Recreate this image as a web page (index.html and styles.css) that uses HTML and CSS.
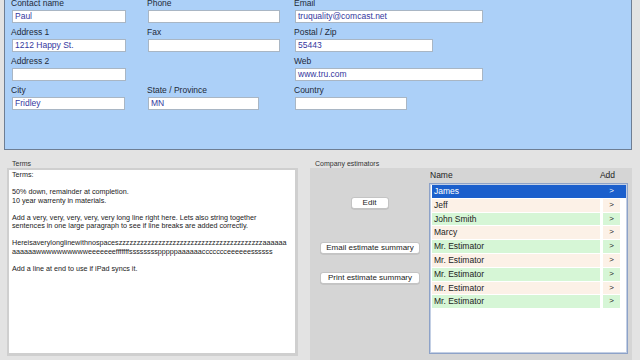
FILE: index.html
```html
<!DOCTYPE html>
<html>
<head>
<meta charset="utf-8">
<link rel="stylesheet" href="styles.css">
</head>
<body>
<div class="page">
  <div class="contact">
    <div class="grid">
      <div class="field"><div class="lbl">Contact name</div><div class="inp w114">Paul</div></div>
      <div class="field"><div class="lbl">Phone</div><div class="inp w132"></div></div>
      <div class="field"><div class="lbl">Email</div><div class="inp w188">truquality@comcast.net</div></div>

      <div class="field"><div class="lbl">Address 1</div><div class="inp w114">1212 Happy St.</div></div>
      <div class="field"><div class="lbl">Fax</div><div class="inp w132"></div></div>
      <div class="field"><div class="lbl">Postal / Zip</div><div class="inp w138">55443</div></div>

      <div class="field"><div class="lbl">Address 2</div><div class="inp w114"></div></div>
      <div class="field"></div>
      <div class="field"><div class="lbl">Web</div><div class="inp w188">www.tru.com</div></div>

      <div class="field"><div class="lbl">City</div><div class="inp w113">Fridley</div></div>
      <div class="field"><div class="lbl">State / Province</div><div class="inp w111">MN</div></div>
      <div class="field"><div class="lbl">Country</div><div class="inp w112"></div></div>
    </div>
  </div>

  <div class="lower">
    <div class="terms">
      <div class="sect-lbl">Terms</div>
      <div class="terms-frame">
        <div class="terms-text"><p>Terms:</p><p>&nbsp;</p><p>50% down, remainder at completion.</p><p>10 year warrenty in materials.</p><p>&nbsp;</p><p>Add a very, very, very, very, very long line right here. Lets also string together</p><p>sentences in one large paragraph to see if line breaks are added correctly.</p><p>&nbsp;</p><p>Hereisaverylonglinewithnospaceszzzzzzzzzzzzzzzzzzzzzzzzzzzzzzzzzzzzzzzzaaaaaa</p><p>aaaaaawwwwwwwwwweeeeeeefffffffsssssssspppppaaaaaaccccccceeeeeessssss</p><p>&nbsp;</p><p>Add a line at end to use if iPad syncs it.</p></div>
      </div>
    </div>

    <div class="estim">
      <div class="sect-lbl">Company estimators</div>
      <div class="estim-panel">
        <div class="btns">
          <div class="btn edit">Edit</div>
          <div class="btn email">Email estimate summary</div>
          <div class="btn print">Print estimate summary</div>
        </div>
        <div class="table">
          <div class="thead"><span>Name</span><span>Add</span></div>
          <div class="list">
            <div class="row sel"><div class="name">James</div><div class="add">&gt;</div></div>
            <div class="row peach"><div class="name">Jeff</div><div class="add">&gt;</div></div>
            <div class="row green"><div class="name">John Smith</div><div class="add">&gt;</div></div>
            <div class="row peach"><div class="name">Marcy</div><div class="add">&gt;</div></div>
            <div class="row green"><div class="name">Mr. Estimator</div><div class="add">&gt;</div></div>
            <div class="row peach"><div class="name">Mr. Estimator</div><div class="add">&gt;</div></div>
            <div class="row green"><div class="name">Mr. Estimator</div><div class="add">&gt;</div></div>
            <div class="row peach"><div class="name">Mr. Estimator</div><div class="add">&gt;</div></div>
            <div class="row green"><div class="name">Mr. Estimator</div><div class="add">&gt;</div></div>
          </div>
        </div>
      </div>
    </div>
  </div>
</div>
</body>
</html>
```

FILE: styles.css
```css
* { box-sizing: border-box; }
html, body { margin: 0; padding: 0; }
body {
  width: 640px;
  height: 360px;
  overflow: hidden;
  background: #e3e3e3;
  font-family: "Liberation Sans", Arial, Helvetica, sans-serif;
  color: #222;
}
.page { width: 640px; height: 360px; overflow: hidden; }

.contact {
  margin: -12px 0 0 4px;
  width: 628px;
  height: 162px;
  background: #acd0f8;
  border: 1px solid #6e7e94;
  border-top: none;
  padding: 10px 0 0 6px;
}
.grid {
  display: grid;
  grid-template-columns: 136px 147px 200px;
  row-gap: 4px;
}
.field { height: 25px; display: flex; flex-direction: column; }
.lbl {
  font-size: 8.5px;
  line-height: 10px;
  height: 10px;
  color: #1e2a38;
  margin-bottom: 2px;
}
.inp {
  height: 13px;
  background: #fff;
  border: 1px solid #a9b6c4;
  font-size: 8.5px;
  line-height: 11px;
  padding-left: 2px;
  color: #3438a0;
  margin-left: 1px;
}
.w111 { width: 111px; }
.w112 { width: 112px; }
.w113 { width: 113px; }
.w114 { width: 114px; }
.w132 { width: 132px; }
.w138 { width: 138px; }
.w188 { width: 188px; }

.lower {
  display: flex;
  margin-top: 9px;
}
.sect-lbl {
  font-size: 7px;
  line-height: 9px;
  height: 9px;
  color: #333;
}
.terms { width: 310px; padding-left: 7px; }
.terms .sect-lbl { padding-left: 5px; }
.terms-frame {
  width: 291px;
  height: 188px;
  background: #cfcfcf;
  padding: 2px 3px 3px 2px;
}
.terms-text {
  background: #fff;
  height: 100%;
  padding: 1px 0 0 3px;
  font-size: 7.2px;
  line-height: 8.5px;
  color: #1a1a1a;
  white-space: nowrap;
  overflow: hidden;
}
.terms-text p { margin: 0; height: 8.5px; }

.estim { width: 322px; }
.estim .sect-lbl { padding-left: 5px; }
.estim-panel {
  height: 200px;
  background: #d5d5d5;
  display: flex;
}
.btns {
  width: 119px;
  display: flex;
  flex-direction: column;
  align-items: center;
  padding-top: 29px;
}
.btn {
  background: #fff;
  border: 1px solid #c4c4c4;
  border-radius: 3px;
  font-size: 8px;
  line-height: 10px;
  height: 12px;
  text-align: center;
  color: #222;
  box-shadow: 0 0.5px 0.5px rgba(0,0,0,0.15);
}
.edit { width: 38px; }
.email { width: 100px; margin-top: 33px; margin-left: 1px; }
.print { width: 100px; margin-top: 18px; margin-left: 1px; }

.table { width: 199px; }
.thead {
  display: flex;
  justify-content: space-between;
  font-size: 8.5px;
  line-height: 10px;
  height: 15px;
  padding: 2px 13px 0 1px;
  color: #222;
}
.list {
  height: 171px;
  background: #fff;
  border: 1px solid #8da2c8;
  box-shadow: inset 0 0 0 1px #c3cfe4;
  padding: 1px 1px 0 2px;
  display: flex;
  flex-direction: column;
  gap: 1px;
}
.row {
  height: 12.8px;
  display: flex;
  gap: 3px;
  font-size: 8.5px;
  line-height: 12.8px;
}
.row .name { width: 168px; padding-left: 2px; }
.row .add { width: 17px; text-align: center; font-size: 8px; }
.row.peach .name, .row.peach .add { background: #fcf1e7; }
.row.green .name, .row.green .add { background: #d6f6d6; }
.row.sel { background: #1b5fcc; color: #fff; }
```
